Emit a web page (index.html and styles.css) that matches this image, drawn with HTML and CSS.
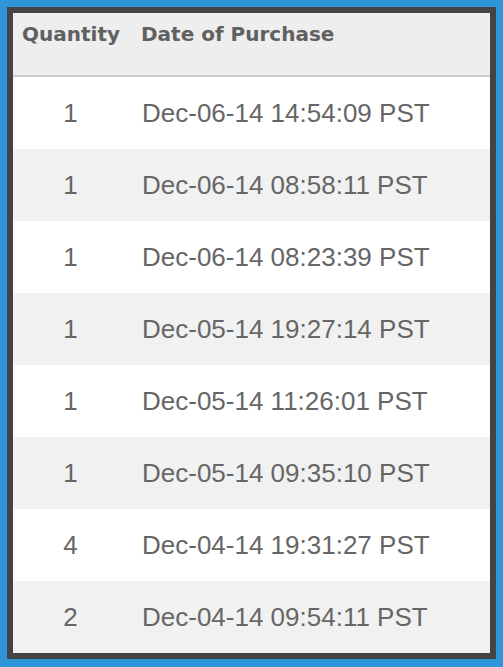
FILE: index.html
```html
<!DOCTYPE html>
<html>
<head>
<meta charset="utf-8">
<link rel="stylesheet" href="styles.css">
</head>
<body>
<div class="frame">
  <div class="table">
    <div class="row head">
      <div class="cell qty">Quantity</div>
      <div class="cell date">Date of Purchase</div>
    </div>
    <div class="row"><div class="cell qty">1</div><div class="cell date">Dec-06-14 14:54:09 PST</div></div>
    <div class="row alt"><div class="cell qty">1</div><div class="cell date">Dec-06-14 08:58:11 PST</div></div>
    <div class="row"><div class="cell qty">1</div><div class="cell date">Dec-06-14 08:23:39 PST</div></div>
    <div class="row alt"><div class="cell qty">1</div><div class="cell date">Dec-05-14 19:27:14 PST</div></div>
    <div class="row"><div class="cell qty">1</div><div class="cell date">Dec-05-14 11:26:01 PST</div></div>
    <div class="row alt"><div class="cell qty">1</div><div class="cell date">Dec-05-14 09:35:10 PST</div></div>
    <div class="row"><div class="cell qty">4</div><div class="cell date">Dec-04-14 19:31:27 PST</div></div>
    <div class="row alt"><div class="cell qty">2</div><div class="cell date">Dec-04-14 09:54:11 PST</div></div>
  </div>
</div>
</body>
</html>
```
FILE: styles.css
```css
html, body {
  margin: 0;
  padding: 0;
  background: #2e96d8;
}
.frame {
  width: 503px;
  height: 667px;
  box-sizing: border-box;
  padding: 7px 7px 8px 7px;
  background: #2e96d8;
}
.table {
  border: 6px solid #444444;
  background: #ffffff;
  display: flex;
  flex-direction: column;
}
.row {
  display: grid;
  grid-template-columns: 115px 1fr;
  height: 72px;
  flex: none;
  align-items: center;
  font-family: "Liberation Sans", Arial, sans-serif;
  font-size: 26px;
  color: #666666;
  background: #ffffff;
}
.row.alt {
  background: #f1f1f1;
}
.row .qty {
  text-align: center;
}
.row .date {
  padding-left: 14px;
}
.row.head {
  height: 64px;
  box-sizing: border-box;
  align-items: start;
  background: #eeeeee;
  border-bottom: 2px solid #cccccc;
  font-family: "DejaVu Sans", Verdana, sans-serif;
  font-weight: bold;
  font-size: 20px;
  line-height: 24px;
  color: #606060;
  padding-top: 9px;
}
.row.head .qty {
  text-align: left;
  padding-left: 9px;
}
.row.head .date {
  padding-left: 13px;
}
.cell {
  white-space: nowrap;
}
```
